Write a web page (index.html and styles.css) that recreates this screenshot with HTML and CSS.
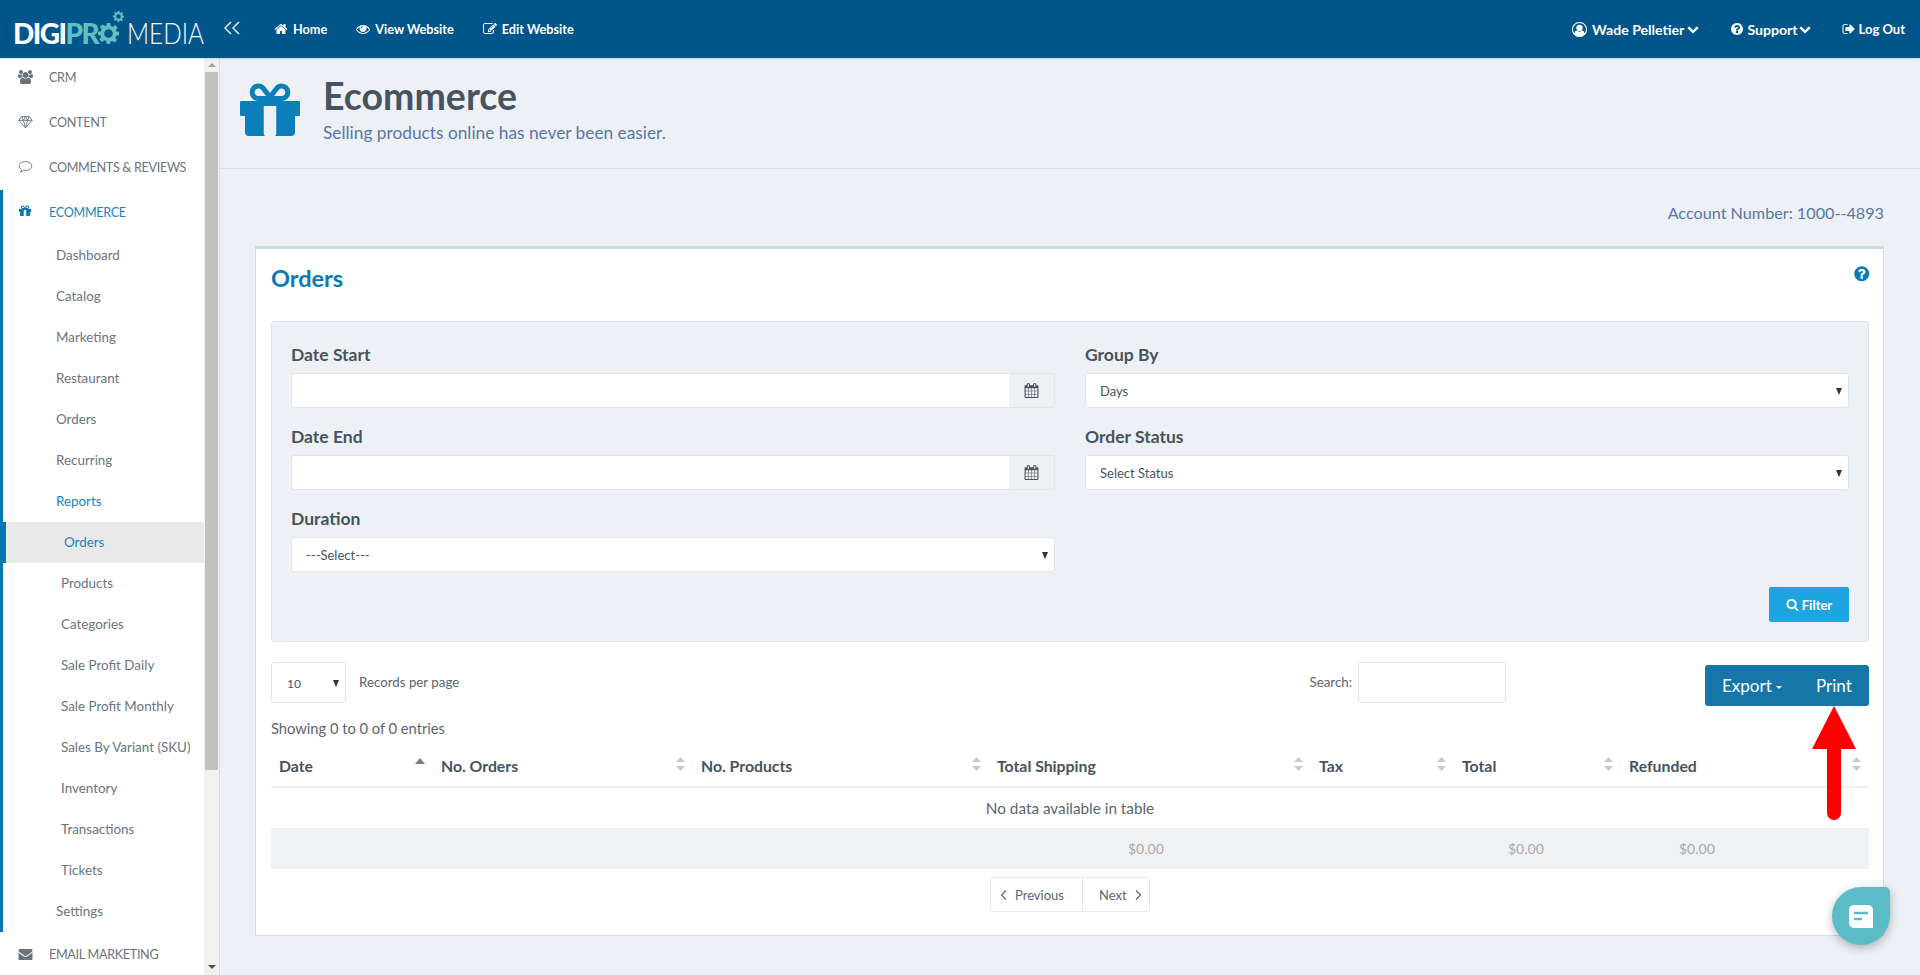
FILE: index.html
```html
<!DOCTYPE html>
<html lang="en">
<head>
<meta charset="utf-8">
<title>Ecommerce - Orders</title>
<link rel="stylesheet" href="styles.css">
</head>
<body>
<svg class="sprite" xmlns="http://www.w3.org/2000/svg">
  <symbol id="i-home" viewBox="0 0 1792 1792"><path d="M1472 992v480q0 26-19 45t-45 19h-384v-384h-256v384h-384q-26 0-45-19t-19-45v-480q0-1 .5-3t.5-3l575-474 575 474q1 2 1 6zm223-69l-62 74q-8 9-21 11h-3q-13 0-21-7l-692-577-692 577q-12 8-24 7-13-2-21-11l-62-74q-8-10-7-23.500t11-21.500l719-599q32-26 76-26t76 26l244 204v-195q0-14 9-23t23-9h192q14 0 23 9t9 23v408l219 182q10 8 11 21.500t-7 23.500z"/></symbol>
  <symbol id="i-eye" viewBox="0 0 1792 1792"><path d="M1664 960q-152-236-381-353 61 104 61 225 0 185-131.500 316.500t-316.500 131.500-316.500-131.500-131.500-316.500q0-121 61-225-229 117-381 353 133 205 333.500 326.500t434.500 121.500 434.500-121.500 333.500-326.500zm-720-384q0-20-14-34t-34-14q-125 0-214.500 89.500t-89.500 214.500q0 20 14 34t34 14 34-14 14-34q0-86 61-147t147-61q20 0 34-14t14-34zm848 384q0 34-20 69-140 230-376.500 368.500t-499.500 138.500-499.500-139-376.500-368q-20-35-20-69t20-69q140-229 376.500-368t499.500-139 499.500 139 376.500 368q20 35 20 69z"/></symbol>
  <symbol id="i-edit" viewBox="0 0 1792 1792"><path d="M888 1184l116-116-152-152-116 116v56h96v96h56zm440-720q-16-16-33 1l-350 350q-17 17-1 33t33-1l350-350q17-17 1-33zm80 594v190q0 119-84.500 203.500t-203.500 84.500h-832q-119 0-203.500-84.500t-84.500-203.500v-832q0-119 84.500-203.500t203.500-84.500h832q63 0 117 25 15 7 18 23 3 17-9 29l-49 49q-14 14-32 8-23-6-45-6h-832q-66 0-113 47t-47 113v832q0 66 47 113t113 47h832q66 0 113-47t47-113v-126q0-13 9-22l64-64q15-15 35-7t20 29zm-96-738l288 288-672 672h-288v-288zm444 132l-92 92-288-288 92-92q28-28 68-28t68 28l152 152q28 28 28 68t-28 68z"/></symbol>
  <symbol id="i-chev" viewBox="0 0 1792 1792"><path d="M1683 808l-742 741q-19 19-45 19t-45-19l-742-741q-19-19-19-45.500t19-45.500l166-165q19-19 45-19t45 19l531 531 531-531q19-19 45-19t45 19l166 165q19 19 19 45.500t-19 45.500z"/></symbol>
  <symbol id="i-help" viewBox="0 0 1792 1792"><path d="M1024 1376v-192q0-14-9-23t-23-9h-192q-14 0-23 9t-9 23v192q0 14 9 23t23 9h192q14 0 23-9t9-23zm256-672q0-88-55.500-163t-138.500-116-170-41q-243 0-371 213-15 24 8 42l132 100q7 6 19 6 16 0 25-12 53-68 86-92 34-24 86-24 48 0 85.500 26t37.500 59q0 38-20 61t-68 45q-63 28-115.500 86.500t-52.500 125.500v36q0 14 9 23t23 9h192q14 0 23-9t9-23q0-19 21.500-49.500t54.500-49.500q32-18 49-28.500t46-35 44.500-48 28-60.500 12.500-81zm384 192q0 209-103 385.500t-279.500 279.500-385.500 103-385.500-103-279.500-279.500-103-385.500 103-385.500 279.500-279.500 385.500-103 385.500 103 279.500 279.500 103 385.500z"/></symbol>
  <symbol id="i-out" viewBox="0 0 1792 1792"><path d="M704 1440q0 4 1 20t.5 26.500-3 23.500-10 19.500-20.500 6.500h-320q-119 0-203.500-84.500t-84.500-203.500v-704q0-119 84.500-203.500t203.500-84.500h320q13 0 22.500 9.500t9.500 22.500q0 4 1 20t.5 26.500-3 23.500-10 19.500-20.500 6.500h-320q-66 0-113 47t-47 113v704q0 66 47 113t113 47h312l11.500 1 11.500 3 8 5.500 7 9 2 13.500zm928-544q0 26-19 45l-544 544q-19 19-45 19t-45-19-19-45v-288h-448q-26 0-45-19t-19-45v-384q0-26 19-45t45-19h448v-288q0-26 19-45t45-19 45 19l544 544q19 19 19 45z"/></symbol>
  <symbol id="i-user" viewBox="0 0 1792 1792"><path d="M896 0q182 0 348 71t286 191 191 286 71 348q0 181-70.500 347t-190.500 286-286 191.500-349 71.500-349-71-285.500-191.500-190.500-286-71-347.500 71-348 191-286 286-191 348-71zm619 1351q149-205 149-455 0-156-61-298t-164-245-245-164-298-61-298 61-245 164-164 245-61 298q0 250 149 455 66-327 306-327 131 128 313 128t313-128q240 0 306 327zm-235-647q0-159-112.500-271.500t-271.500-112.500-271.500 112.500-112.500 271.500 112.500 271.500 271.500 112.500 271.500-112.500 112.500-271.500z"/></symbol>
  <symbol id="i-gift" viewBox="0 0 1792 1792"><path d="M1056 1356v-716h-320v716q0 25 18 38.500t46 13.500h192q28 0 46-13.500t18-38.500zm-456-972h195l-126-161q-26-31-69-31-40 0-68 28t-28 68 28 68 68 28zm688-96q0-40-28-68t-68-28q-43 0-69 31l-125 161h194q40 0 68-28t28-68zm376 256v320q0 14-9 23t-23 9h-96v416q0 40-28 68t-68 28h-1088q-40 0-68-28t-28-68v-416h-96q-14 0-23-9t-9-23v-320q0-14 9-23t23-9h440q-93 0-158.500-65.500t-65.500-158.500 65.500-158.500 158.500-65.500q107 0 168 77l128 165 128-165q61-77 168-77 93 0 158.500 65.500t65.500 158.500-65.500 158.500-158.500 65.500h440q14 0 23 9t9 23z"/></symbol>
  <symbol id="i-users" viewBox="0 0 1920 1792"><path d="M593 896q-162 5-265 128h-134q-82 0-138-40.500t-56-118.500q0-353 124-353 6 0 43.500 21t97.500 42.500 119 21.500q67 0 133-23-5 37-5 66 0 139 81 256zm1071 637q0 120-73 189.500t-194 69.500h-874q-121 0-194-69.500t-73-189.500q0-53 3.500-103.500t14-109 26.500-108.500 43-97.500 62-81 85.500-53.500 111.500-20q10 0 43 21.500t73 48 107 48 135 21.500 135-21.500 107-48 73-48 43-21.500q61 0 111.500 20t85.500 53.500 62 81 43 97.500 26.500 108.500 14 109 3.500 103.500zm-1024-1277q0 106-75 181t-181 75-181-75-75-181 75-181 181-75 181 75 75 181zm704 384q0 159-112.500 271.500t-271.500 112.500-271.500-112.500-112.500-271.500 112.500-271.500 271.500-112.500 271.500 112.500 112.500 271.500zm576 225q0 78-56 118.500t-138 40.500h-134q-103-123-265-128 81-117 81-256 0-29-5-66 66 23 133 23 59 0 119-21.500t97.500-42.500 43.500-21q124 0 124 353zm-128-609q0 106-75 181t-181 75-181-75-75-181 75-181 181-75 181 75 75 181z"/></symbol>
  <symbol id="i-mail" viewBox="0 0 1792 1792"><path d="M1792 710v794q0 66-47 113t-113 47h-1472q-66 0-113-47t-47-113v-794q44 49 101 87 362 246 497 345 57 42 92.500 65.500t94.500 48 110 24.500h2q51 0 110-24.500t94.500-48 92.500-65.500q170-123 498-345 57-39 100-87zm0-294q0 79-49 151t-122 123q-376 261-468 325-10 7-42.500 30.500t-54 38-52 32.500-57.500 27-50 9h-2q-23 0-50-9t-57.500-27-52-32.500-54-38-42.500-30.500q-91-64-262-182.500t-205-142.500q-62-42-117-115.500t-55-136.500q0-78 41.500-130t118.500-52h1472q65 0 112.500 47t47.500 113z"/></symbol>
  <symbol id="i-cal" viewBox="0 0 1792 1792"><path d="M192 1664h288v-288h-288v288zm352 0h320v-288h-320v288zm-352-352h288v-320h-288v320zm352 0h320v-320h-320v320zm-352-384h288v-288h-288v288zm736 736h320v-288h-320v288zm-384-736h320v-288h-320v288zm768 736h288v-288h-288v288zm-384-352h320v-320h-320v320zm-352-864v-288q0-13-9.500-22.500t-22.500-9.500h-64q-13 0-22.500 9.500t-9.500 22.500v288q0 13 9.500 22.500t22.500 9.500h64q13 0 22.500-9.500t9.500-22.500zm736 864h288v-320h-288v320zm-384-384h320v-288h-320v288zm384 0h288v-288h-288v288zm32-480v-288q0-13-9.500-22.500t-22.500-9.500h-64q-13 0-22.500 9.500t-9.500 22.500v288q0 13 9.500 22.500t22.500 9.500h64q13 0 22.500-9.500t9.500-22.500zm384-64v1280q0 52-38 90t-90 38h-1408q-52 0-90-38t-38-90v-1280q0-52 38-90t90-38h128v-96q0-66 47-113t113-47h64q66 0 113 47t47 113v96h384v-96q0-66 47-113t113-47h64q66 0 113 47t47 113v96h128q52 0 90 38t38 90z"/></symbol>
  <symbol id="i-search" viewBox="0 0 1792 1792"><path d="M1216 832q0-185-131.500-316.500t-316.500-131.500-316.500 131.500-131.500 316.500 131.500 316.500 316.500 131.500 316.500-131.500 131.500-316.500zm512 832q0 52-38 90t-90 38q-54 0-90-38l-343-342q-179 124-399 124-143 0-273.500-55.500t-225-150-150-225-55.500-273.500 55.500-273.500 150-225 225-150 273.500-55.500 273.500 55.500 225 150 150 225 55.500 273.500q0 220-124 399l343 343q37 37 37 90z"/></symbol>
  <symbol id="i-gear" viewBox="0 0 24 24"><path d="M10 0h4l.6 3.300 2.200.9 2.800-1.900 2.800 2.800-1.900 2.800.9 2.200L24 10v4l-3.300.6-.9 2.200 1.900 2.800-2.800 2.800-2.800-1.900-2.200.9L14 24h-4l-.6-3.300-2.200-.9-2.800 1.900-2.800-2.800 1.900-2.800-.9-2.200L0 14v-4l3.300-.6.9-2.200-1.900-2.800 2.800-2.800 2.800 1.900 2.200-.9zM12 7a5 5 0 1 0 0 10 5 5 0 0 0 0-10z" fill-rule="evenodd"/></symbol>
  <symbol id="i-sort" viewBox="0 0 9 14"><path d="M4.500 0 9 5H0zM4.500 14 0 9h9z"/></symbol>
  <symbol id="i-asc" viewBox="0 0 10 6"><path d="M5 0l5 6H0z"/></symbol>
</svg>

<header class="topbar">
  <a class="logo">
    <span class="logo-strong">DIGI<span class="logo-teal">PR<span class="logo-o">O<svg class="logo-gear"><use href="#i-gear"/></svg><svg class="logo-gear-small"><use href="#i-gear"/></svg></span></span></span>
    <span class="logo-light">MEDIA</span>
  </a>
  <svg class="collapse" viewBox="0 0 18 14"><path d="M8 1 2 7l6 6M16 1l-6 6 6 6"/></svg>
  <nav class="topnav">
    <a class="toplink"><svg class="ti"><use href="#i-home"/></svg>Home</a>
    <a class="toplink"><svg class="ti"><use href="#i-eye"/></svg>View Website</a>
    <a class="toplink"><svg class="ti"><use href="#i-edit"/></svg>Edit Website</a>
  </nav>
  <nav class="usernav">
    <a class="toplink user"><svg class="ti"><use href="#i-user"/></svg>Wade Pelletier<svg class="tc"><use href="#i-chev"/></svg></a>
    <a class="toplink support"><svg class="ti"><use href="#i-help"/></svg>Support<svg class="tc"><use href="#i-chev"/></svg></a>
    <a class="toplink logout"><svg class="ti"><use href="#i-out"/></svg>Log Out</a>
  </nav>
</header>

<div class="shell">
  <aside class="sidebar">
    <div class="side-list">
      <a class="nav-top"><svg class="ni"><use href="#i-users"/></svg>CRM</a>
      <a class="nav-top"><svg class="ni" viewBox="0 0 18 16"><path class="stroke" d="M4.500 1.500h9L17 6l-8 9-8-9zM1 6h16M6.500 6 9 15l2.500-9M4.500 1.500 6.500 6 9 1.500 11.500 6l2-4.500"/></svg>CONTENT</a>
      <a class="nav-top"><svg class="ni" viewBox="0 0 18 16"><path class="stroke" d="M9 1.500c4.300 0 7.500 2.300 7.500 5.300s-3.200 5.300-7.500 5.300c-.8 0-1.500-.1-2.200-.2-1 1-2.300 1.800-3.800 2.100.8-.9 1.200-1.800 1.300-2.900C2.700 10.200 1.500 8.600 1.500 6.800c0-3 3.200-5.300 7.500-5.300z"/></svg>COMMENTS &amp; REVIEWS</a>
      <div class="nav-group">
        <a class="nav-top nav-open"><svg class="ni"><use href="#i-gift"/></svg>ECOMMERCE</a>
        <a class="nav-sub">Dashboard</a>
        <a class="nav-sub">Catalog</a>
        <a class="nav-sub">Marketing</a>
        <a class="nav-sub">Restaurant</a>
        <a class="nav-sub">Orders</a>
        <a class="nav-sub">Recurring</a>
        <a class="nav-sub nav-on">Reports</a>
        <a class="nav-leaf nav-active">Orders</a>
        <a class="nav-leaf">Products</a>
        <a class="nav-leaf">Categories</a>
        <a class="nav-leaf">Sale Profit Daily</a>
        <a class="nav-leaf">Sale Profit Monthly</a>
        <a class="nav-leaf">Sales By Variant (SKU)</a>
        <a class="nav-leaf">Inventory</a>
        <a class="nav-leaf">Transactions</a>
        <a class="nav-leaf">Tickets</a>
        <a class="nav-sub">Settings</a>
      </div>
      <a class="nav-top nav-last"><svg class="ni"><use href="#i-mail"/></svg>EMAIL MARKETING</a>
    </div>
  </aside>
  <div class="scrollbar">
    <span class="sb-up"></span>
    <span class="sb-thumb"></span>
    <span class="sb-down"></span>
  </div>

  <main class="main">
    <section class="page-head">
      <svg class="head-icon"><use href="#i-gift"/></svg>
      <div class="head-text">
        <h1>Ecommerce</h1>
        <p>Selling products online has never been easier.</p>
      </div>
    </section>
    <div class="content">
      <p class="account">Account Number: 1000--4893</p>
      <section class="card">
        <div class="card-head">
          <h2>Orders</h2>
          <svg class="help"><use href="#i-help"/></svg>
        </div>
        <form class="filters">
          <div class="filter-grid">
            <div class="field">
              <label class="flabel">Date Start</label>
              <div class="input-group"><input class="finput" type="text"><span class="addon"><svg class="cal"><use href="#i-cal"/></svg></span></div>
            </div>
            <div class="field">
              <label class="flabel">Group By</label>
              <span class="select-wrap"><select class="fselect"><option>Days</option></select></span>
            </div>
            <div class="field">
              <label class="flabel">Date End</label>
              <div class="input-group"><input class="finput" type="text"><span class="addon"><svg class="cal"><use href="#i-cal"/></svg></span></div>
            </div>
            <div class="field">
              <label class="flabel">Order Status</label>
              <span class="select-wrap"><select class="fselect"><option>Select Status</option></select></span>
            </div>
            <div class="field">
              <label class="flabel">Duration</label>
              <span class="select-wrap"><select class="fselect"><option>---Select---</option></select></span>
            </div>
          </div>
          <div class="filter-actions">
            <button class="btn-filter" type="button"><svg class="si"><use href="#i-search"/></svg>Filter</button>
          </div>
        </form>

        <div class="toolbar">
          <span class="select-wrap len-wrap"><select class="len"><option>10</option></select></span>
          <span class="tool-label rec">Records per page</span>
          <label class="tool-label search">Search:</label>
          <input class="search-input" type="text">
          <div class="btn-group">
            <button class="btn-main btn-export" type="button">Export<span class="caret"></span></button>
            <button class="btn-main btn-print" type="button">Print</button>
          </div>
        </div>
        <p class="showing">Showing 0 to 0 of 0 entries</p>

        <table class="data">
          <colgroup>
            <col class="c1"><col class="c2"><col class="c3"><col class="c4"><col class="c5"><col class="c6"><col class="c7">
          </colgroup>
          <thead>
            <tr>
              <th><div class="th-in">Date<svg class="sort-asc"><use href="#i-asc"/></svg></div></th>
              <th><div class="th-in">No. Orders<svg class="sort"><use href="#i-sort"/></svg></div></th>
              <th><div class="th-in">No. Products<svg class="sort"><use href="#i-sort"/></svg></div></th>
              <th><div class="th-in">Total Shipping<svg class="sort"><use href="#i-sort"/></svg></div></th>
              <th><div class="th-in">Tax<svg class="sort"><use href="#i-sort"/></svg></div></th>
              <th><div class="th-in">Total<svg class="sort"><use href="#i-sort"/></svg></div></th>
              <th><div class="th-in">Refunded<svg class="sort"><use href="#i-sort"/></svg></div></th>
            </tr>
          </thead>
          <tbody>
            <tr><td class="empty" colspan="7">No data available in table</td></tr>
          </tbody>
          <tfoot>
            <tr>
              <td colspan="3"></td>
              <td class="f1">$0.00</td>
              <td></td>
              <td class="f2">$0.00</td>
              <td class="f3">$0.00</td>
            </tr>
          </tfoot>
        </table>

        <div class="pager">
          <a class="page-btn prev"><svg class="pi" viewBox="0 0 8 12"><path d="M6 1.500 1.500 6 6 10.500"/></svg>Previous</a>
          <a class="page-btn next">Next<svg class="pi" viewBox="0 0 8 12"><path d="M2 1.500 6.500 6 2 10.500"/></svg></a>
        </div>
      </section>
    </div>
  </main>
</div>

<svg class="arrow" viewBox="0 0 44 114"><path d="M22 0 44 43H29V107a7 7 0 0 1-14 0V43H0z"/></svg>
<button class="chat" type="button">
  <svg class="chat-icon" viewBox="0 0 24 23"><path class="chat-bg" d="M5 0h14a5 5 0 0 1 5 5v18H5a5 5 0 0 1-5-5V5a5 5 0 0 1 5-5z"/><path class="chat-line" d="M5 8h14M5 14h8"/></svg>
</button>
</body>
</html>
```

FILE: styles.css
```css
* { box-sizing: border-box; }
html, body { margin: 0; height: 975px; overflow: hidden; }
body {
  font-family: "Lato", "Noto Sans", sans-serif;
  font-size: 14px;
  color: #47535f;
  background: #edf1f5;
  position: relative;
}
.sprite { display: none; }

/* top bar */
.topbar {
  height: 58px;
  background: #00568a;
  display: flex;
  align-items: center;
  color: #fff;
  box-shadow: 0 1px 2px rgba(0,0,0,.12);
  position: relative;
  z-index: 2;
}
.logo {
  display: flex;
  align-items: baseline;
  margin-left: 13px;
  width: 192px;
  height: 30px;
  line-height: 30px;
  margin-top: 5px;
  flex: none;
  white-space: nowrap;
}
.logo-strong { font-weight: 900; font-size: 28px; letter-spacing: -1.500px; }
.logo-teal { color: #5fc0c4; }
.logo-o { position: relative; display: inline-block; color: transparent; width: 21px; }
.logo-gear { position: absolute; left: 0; top: 5px; width: 21px; height: 21px; fill: #5fc0c4; }
.logo-gear-small { position: absolute; left: 15px; top: -7px; width: 11px; height: 11px; fill: #5fc0c4; }
.logo-light { display: inline-block; font-weight: 300; font-size: 30px; margin-left: 8px; transform: scaleX(.81); transform-origin: left center; }
.collapse { width: 18px; height: 14px; margin-left: 18px; fill: none; stroke: #fff; stroke-width: 1.300; flex: none; margin-top: -2px; }
.topnav { display: flex; margin-left: 33px; gap: 29px; }
.usernav { display: flex; margin-left: auto; margin-right: 15px; }
.toplink {
  display: flex;
  align-items: center;
  font-size: 12.700px;
  font-weight: 700;
  color: #fff;
  white-space: nowrap;
}
.ti { width: 14px; height: 14px; fill: #fff; margin-right: 5px; flex: none; }
.tc { width: 12px; height: 12px; fill: #fff; margin-left: 3px; flex: none; }
.user, .support { font-size: 14.100px; }
.user .ti { width: 15px; height: 15px; }
.support .tc { margin-left: 1px; }
.support { margin-left: 31px; }
.support .ti { margin-right: 3px; }
.logout { margin-left: 31px; font-size: 13px; }
.logout .ti { margin-right: 3px; }

/* shell */
.shell { display: flex; height: 917px; }
.sidebar { width: 204px; flex: none; background: #fff; overflow: hidden; }
.side-list { margin-top: -3.500px; }
.scrollbar {
  width: 16px;
  flex: none;
  background: #f1f1f1;
  border-right: 1px solid #d6dde3;
  display: flex;
  flex-direction: column;
  align-items: center;
  position: relative;
}
.sb-up { width: 0; height: 0; border-left: 4px solid transparent; border-right: 4px solid transparent; border-bottom: 4px solid #a3a3a3; margin-top: 5px; }
.sb-thumb { width: 13px; height: 698px; background: #c1c1c1; margin-top: 5px; margin-left: -1px; }
.sb-down { width: 0; height: 0; border-left: 4px solid transparent; border-right: 4px solid transparent; border-top: 4px solid #505050; margin-top: auto; margin-bottom: 6px; }

.nav-top {
  display: flex;
  align-items: center;
  height: 45px;
  padding-left: 18px;
  font-size: 12.600px;
  letter-spacing: -.300px;
  color: #6b747d;
  white-space: nowrap;
}
.nav-group { border-left: 3px solid #0077b0; }
.nav-group .nav-top { padding-left: 15px; }
.nav-open { color: #1a85bd; }
.ni { width: 15px; height: 14px; margin-right: 16px; fill: #6b747d; flex: none; }
.nav-open .ni { fill: #0a78b0; width: 14px; margin-right: 17px; }
.ni .stroke { fill: none; stroke: #6b747d; stroke-width: 1.100; }
.nav-sub, .nav-leaf {
  display: flex;
  align-items: center;
  height: 41px;
  font-size: 13.400px;
  color: #6b747d;
  white-space: nowrap;
}
.nav-sub { padding-left: 53px; }
.nav-leaf { padding-left: 58px; }
.nav-on { color: #1a85bd; }
.nav-active {
  background: #eae9e9;
  color: #1a85bd;
  border-left: 3px solid #0077b0;
  padding-left: 58px;
  margin-right: -1px;
}

/* main */
.main { flex: 1; min-width: 0; }
.page-head {
  height: 111px;
  border-bottom: 1px solid #d8dfe6;
  display: flex;
  padding: 25px 0 0 15px;
}
.head-icon { width: 70px; height: 70px; fill: #0a7fba; flex: none; margin-top: -2px; }
.head-text { margin-left: 18px; }
.head-text h1 { margin: -7px 0 0; font-size: 37.500px; line-height: 40px; font-weight: 700; color: #47535f; }
.head-text p { margin: 5px 0 0; font-size: 17.300px; line-height: 24px; color: #5877a8; }
.content { padding: 0 36px 0 35px; }
.account { margin: 0; height: 77px; padding-top: 32px; line-height: 24px; font-size: 16.200px; color: #5877a8; text-align: right; }

/* card */
.card {
  background: #fff;
  border: 1px solid #d3dde5;
  border-top: 3px solid #cfdbe4;
  padding: 0 14px 23px 15px;
  height: 690px;
}
.card-head { height: 72px; display: flex; justify-content: space-between; padding-top: 13px; }
.card-head h2 { margin: 0; font-size: 23.500px; line-height: 32px; font-weight: 700; color: #0a7ab5; }
.help { width: 17.500px; height: 17.500px; fill: #0a7ab5; margin: 3px -1px 0 0; }

.filters {
  background: #edf1f5;
  border: 1px solid #dde3e8;
  border-radius: 3px;
  height: 321px;
  padding: 21px 19px 0 19px;
}
.filter-grid { display: grid; grid-template-columns: 764px 764px; column-gap: 30px; row-gap: 17px; }
.flabel { display: block; font-size: 17.500px; font-weight: 700; line-height: 24px; margin-bottom: 6px; color: #47535f; }
.input-group { display: flex; height: 35px; }
.finput { flex: 1; min-width: 0; height: 35px; background: #fff; border: 1px solid #dfe6ec; border-right: 0; border-radius: 3px 0 0 3px; outline: 0; }
.addon { width: 46px; flex: none; background: #eef0f2; border: 1px solid #dfe6ec; border-left: 0; border-radius: 0 3px 3px 0; display: flex; align-items: center; justify-content: center; }
.cal { width: 15px; height: 15px; fill: #47535f; }
.select-wrap { display: block; position: relative; }
.select-wrap::after {
  content: "";
  position: absolute;
  right: 7px;
  top: 50%;
  margin-top: -3px;
  border-left: 3px solid transparent;
  border-right: 3px solid transparent;
  border-top: 7px solid #333;
  pointer-events: none;
}
.fselect {
  display: block;
  width: 100%;
  height: 35px;
  padding: 1px 0 0 14px;
  background: #fff;
  border: 1px solid #dfe6ec;
  border-radius: 3px;
  font-family: inherit;
  font-size: 13px;
  color: #47535f;
  appearance: none;
  -webkit-appearance: none;
  outline: 0;
}
.filter-actions { display: flex; justify-content: flex-end; margin-top: 15px; }
.btn-filter { width: 80px; height: 35px; background: #1ea4e0; border: 0; border-radius: 2px; color: #fff; font-family: inherit; font-size: 13px; font-weight: 700; display: flex; align-items: center; justify-content: center; }
.si { width: 13px; height: 13px; fill: #fff; margin-right: 3px; }

/* toolbar */
.toolbar { display: flex; align-items: flex-start; margin-top: 20px; height: 44px; }
.len-wrap { width: 75px; flex: none; }
.len-wrap::after { right: 7px; }
.len { display: block; width: 75px; height: 41px; padding: 2px 0 0 15px; background: #fff; border: 1px solid #dfe6ec; border-radius: 3px; font-family: inherit; font-size: 12px; color: #47535f; appearance: none; -webkit-appearance: none; outline: 0; }
.tool-label { font-size: 13.300px; line-height: 40px; color: #5b6670; }
.rec { margin-left: 13px; }
.search { margin-left: auto; margin-right: 6px; }
.search-input { width: 148px; height: 41px; border: 1px solid #dfe6ec; border-radius: 3px; background: #fff; outline: 0; }
.btn-group { display: flex; margin-left: 199px; margin-top: 3px; background: #1477a8; border-radius: 3px; width: 164px; height: 41px; }
.btn-main { background: transparent; border: 0; color: #fff; font-family: inherit; font-size: 17px; padding: 0; height: 41px; }
.btn-export { padding-left: 17px; width: 100px; text-align: left; }
.btn-print { width: 64px; text-align: left; padding-left: 11px; }
.caret { display: inline-block; border-left: 3px solid transparent; border-right: 3px solid transparent; border-top: 3px solid #fff; margin-left: 4px; vertical-align: middle; }
.showing { margin: 11px 0 0; font-size: 14.700px; line-height: 22px; color: #5b6670; }

/* table */
.data { width: 1598px; border-collapse: collapse; table-layout: fixed; margin-top: 7px; }
.c1 { width: 162px; } .c2 { width: 260px; } .c3 { width: 296px; } .c4 { width: 322px; }
.c5 { width: 143px; } .c6 { width: 167px; } .c7 { width: 248px; }
.data th { height: 41px; padding: 0 8px 2px; border-bottom: 2px solid #eceef0; font-size: 15.800px; font-weight: 700; text-align: left; color: #47535f; }
.th-in { display: flex; justify-content: space-between; align-items: center; white-space: nowrap; }
.sort { width: 9px; height: 14px; fill: #c9c9c9; margin-top: -2px; }
.sort-asc { width: 10px; height: 6px; fill: #7c7c7c; margin-top: -9px; }
.empty { height: 41px; text-align: center; font-size: 15.300px; color: #5b6670; padding: 0; }
tfoot td { height: 41px; background: #f0f1f3; font-size: 14px; color: #a4a9ae; padding: 0; }
.f1 { padding-left: 139px; }
.f2 { padding-left: 54px; }
.f3 { padding-left: 58px; }

/* pager */
.pager { display: flex; justify-content: center; margin-top: 8px; }
.page-btn { height: 35px; display: flex; align-items: center; border: 1px solid #e6eaee; background: #fff; font-size: 13px; color: #5b6670; }
.prev { width: 93px; border-radius: 3px 0 0 3px; padding-left: 9px; }
.next { width: 67px; border-left: 0; border-radius: 0 3px 3px 0; padding-left: 16px; }
.pi { width: 8px; height: 12px; fill: none; stroke: #5b6670; stroke-width: 1.200; }
.prev .pi { margin-right: 7px; }
.next .pi { margin-left: 7px; }

/* overlays */
.arrow { position: absolute; left: 1812px; top: 706px; width: 44px; height: 114px; fill: #ff0000; }
.chat {
  position: absolute;
  left: 1832px;
  top: 887px;
  width: 58px;
  height: 58px;
  padding: 0;
  border: 0;
  background: #5bbcc8;
  border-radius: 50% 5px 50% 50%;
  box-shadow: 0 3px 10px rgba(0,0,0,.28);
  display: flex;
  align-items: center;
  justify-content: center;
}
.chat-icon { width: 24px; height: 23px; }
.chat-bg { fill: #fff; }
.chat-line { fill: none; stroke: #5bbcc8; stroke-width: 2.400; }
```
